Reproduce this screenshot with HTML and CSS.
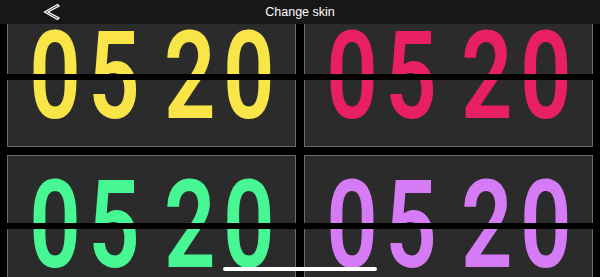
FILE: index.html
```html
<!DOCTYPE html>
<html lang="en">
<head>
<meta charset="utf-8">
<title>Change skin</title>
<link rel="stylesheet" href="styles.css">
</head>
<body>
<header class="topbar">
  <button class="back" aria-label="Back">
    <svg width="18" height="18" viewBox="0 0 18 18">
      <polygon points="14.5,1.5 1.5,9 14.5,16.5 16,15 5,9 16,3" fill="none" stroke="#fff" stroke-width="1.3" stroke-linejoin="miter"/>
    </svg>
  </button>
  <h1 class="title">Change skin</h1>
</header>
<main class="skins">
  <div class="card yellow"><div class="clock"><div class="grp"><span class="d">0</span><span class="d">5</span></div><div class="grp"><span class="d">2</span><span class="d">0</span></div></div></div>
  <div class="card pink"><div class="clock"><div class="grp"><span class="d">0</span><span class="d">5</span></div><div class="grp"><span class="d">2</span><span class="d">0</span></div></div></div>
  <div class="card green"><div class="clock"><div class="grp"><span class="d">0</span><span class="d">5</span></div><div class="grp"><span class="d">2</span><span class="d">0</span></div></div></div>
  <div class="card purple"><div class="clock"><div class="grp"><span class="d">0</span><span class="d">5</span></div><div class="grp"><span class="d">2</span><span class="d">0</span></div></div></div>
</main>
<div class="home-indicator"></div>
</body>
</html>
```
FILE: styles.css
```css
html, body {
  margin: 0;
  padding: 0;
  background: #000;
  width: 600px;
  height: 277px;
  overflow: hidden;
}
.topbar {
  position: fixed;
  top: 0;
  left: 0;
  right: 0;
  height: 24px;
  background: #171717;
  z-index: 5;
  display: flex;
  align-items: center;
  justify-content: center;
}
.back {
  position: absolute;
  left: 43px;
  top: 3px;
  width: 18px;
  height: 18px;
  padding: 0;
  border: 0;
  background: none;
  display: block;
}
.back svg { display: block; }
.title {
  margin: 0;
  font: 400 12.5px/24px "Liberation Sans", Arial, sans-serif;
  color: #fff;
}
.skins {
  display: grid;
  grid-template-columns: repeat(2, minmax(0, 1fr));
  gap: 8px;
  padding: 6px 7px 0;
}
.card {
  position: relative;
  min-width: 0;
  height: 141px;
  box-sizing: border-box;
  background: #2b2b2b;
  border: 1px solid #6c6c6c;
  display: flex;
  align-items: center;
  justify-content: center;
}
.card::after {
  content: "";
  position: absolute;
  left: -1px;
  right: -1px;
  top: 67px;
  height: 6px;
  background: #000;
}
.clock {
  flex-shrink: 0;
  display: flex;
  gap: 22.97px;
  transform: scaleX(0.74);
  font: 600 122px/0.72 Roboto, sans-serif;
}
.grp { display: flex; }
.d {
  flex-shrink: 0;
  width: 79.73px;
  text-align: center;
}
.yellow .clock { color: #f9e548; }
.pink .clock { color: #e81f61; }
.green .clock { color: #46f794; }
.purple .clock { color: #d67bf6; }
.home-indicator {
  position: fixed;
  left: 223px;
  bottom: 6px;
  width: 154px;
  height: 4px;
  border-radius: 2px;
  background: #fff;
  z-index: 6;
}
```
